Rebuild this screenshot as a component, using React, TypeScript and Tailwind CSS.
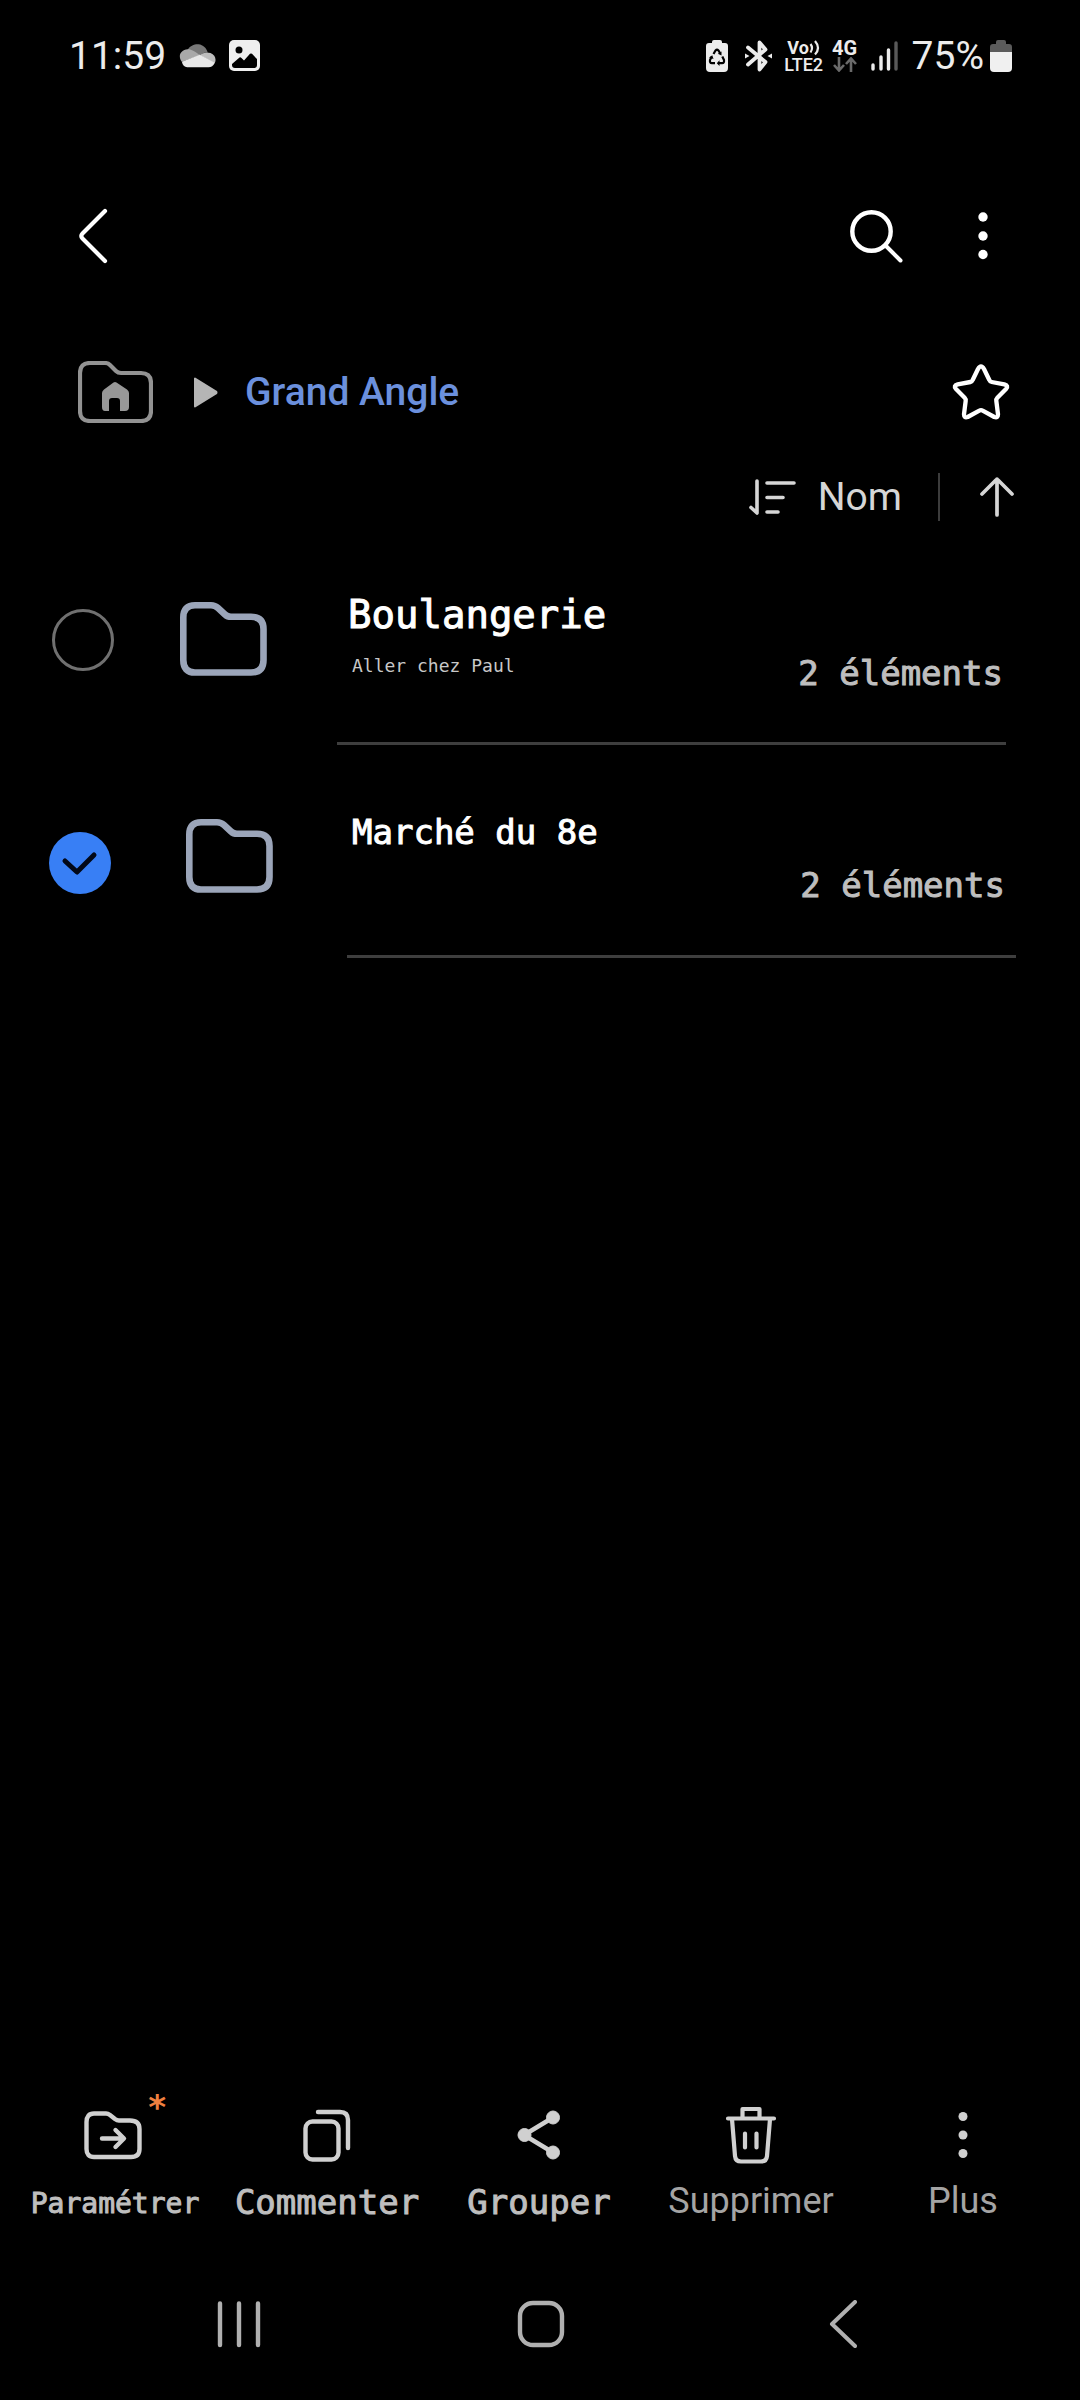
import React, { useState } from "react";

const roboto = "font-['Roboto','Noto_Sans',sans-serif]";
const mono = "font-['DejaVu_Sans_Mono','Liberation_Mono',monospace]";

function StatusBar() {
  return (
    <div className="flex h-[111px] items-center justify-between pl-[69px] pr-[68px] text-[#ececec]">
      <div className="flex items-center">
        <time className="text-[39px] leading-[48px]">11:59</time>
        <svg className="ml-[13px]" width="37" height="24" viewBox="0 0 110 72" aria-label="Nuage">
          <path d="M24 20C32 4 48 0 58 1C72 3 82 12 86 26C76 24 68 30 62 34Z" fill="#787878" />
          <path d="M8 53C-4 38 2 18 26 16C36 16 42 20 64 34Z" fill="#a9a9a9" />
          <path d="M62 34C72 24 84 24 94 27C108 32 113 48 106 58Z" fill="#bdbdbd" />
          <path d="M8 53L62 32L107 56C103 66 96 69 88 70H24C16 69 10 63 8 53Z" fill="#e8e8e8" />
        </svg>
        <svg className="ml-[13px]" width="31" height="31" viewBox="0 0 31 31" aria-label="Image">
          <rect width="31" height="31" rx="5" fill="#efefef" />
          <circle cx="10" cy="10" r="3.500" fill="#000" />
          <path d="M3 25V24L10.500 17.500Q11.500 17 12.500 18L15 20.500L21 13.800Q22 13 23 13.800L28 19V25Q28 28 25 28H6Q3 28 3 25Z" fill="#000" />
        </svg>
      </div>
      <div className="flex items-center">
        <svg width="22" height="32" viewBox="0 0 22 32" aria-label="Économie de batterie">
          <path d="M6 3V2Q6 0 8 0H14Q16 0 16 2V3H19Q22 3 22 6V28Q22 32 18 32H4Q0 32 0 28V6Q0 3 3 3Z" fill="#ececec" />
          <g fill="none" stroke="#000" strokeWidth="2.200" strokeLinejoin="round">
            <path d="M7.500 14L9.500 10.500Q11 9 12.500 10.500L14 13" />
            <path d="M16.300 16.500L18 20Q18.500 23 16 23.200H12.500" />
            <path d="M9 23.200H6Q3.500 23 4 20L5.500 17" />
          </g>
          <path d="M15.500 11.500V15.500L11.800 13.800ZM13.500 20.300V26L10.800 23.200ZM3 17.500L6.300 15.300L7.500 19Z" fill="#000" />
        </svg>
        <svg className="ml-[17px]" width="27" height="32" viewBox="0 0 27 32" aria-label="Bluetooth">
          <path d="M3 7.500L20.500 22L14.500 29.500V2.500L20.500 9.500L3 24.500" fill="none" stroke="#ececec" strokeWidth="3.800" strokeLinecap="round" strokeLinejoin="round" />
          <path d="M0 13.500L4.500 16L0 18.500ZM27 13.500L22.500 16L27 18.500Z" fill="#ececec" />
        </svg>
        <div className="ml-3 flex w-10 flex-col items-center text-[18px] font-bold leading-[17px]">
          <span className="flex items-center">
            Vo
            <svg width="11" height="17" viewBox="0 0 11 17" aria-hidden="true">
              <path d="M1.500 5Q4.500 9 1.500 13.500M6 2Q12 9 6 15.500" fill="none" stroke="#ececec" strokeWidth="2.200" />
            </svg>
          </span>
          <span className="font-medium">LTE2</span>
        </div>
        <div className="ml-[8px] flex w-[26px] flex-col items-center">
          <span className="text-[20px] font-bold leading-[18px]">4G</span>
          <svg width="24" height="15" viewBox="0 0 24 15" aria-hidden="true">
            <path d="M6 0V13M1 8L6 13.500L11 8M18 15V2M13 7L18 1.500L23 7" fill="none" stroke="#6a6a6a" strokeWidth="2.600" />
          </svg>
        </div>
        <svg className="ml-[13px]" width="27" height="30" viewBox="0 0 27 30" aria-label="Signal">
          <path d="M2 24V28M10 16V28M17.500 9V28" stroke="#ececec" strokeWidth="3.400" strokeLinecap="round" />
          <path d="M25 2V28" stroke="#595959" strokeWidth="3.400" strokeLinecap="round" />
        </svg>
        <span className="ml-[14px] text-[39px] leading-[48px]">75%</span>
        <svg className="ml-[6px]" width="22" height="32" viewBox="0 0 22 32" aria-label="Batterie">
          <path d="M6 4V2Q6 0 8 0H14Q16 0 16 2V4H19Q22 4 22 7V13H0V7Q0 4 3 4Z" fill="#5b5b5b" />
          <path d="M0 12H22V28Q22 32 18 32H4Q0 32 0 28Z" fill="#f0f0f0" />
        </svg>
      </div>
    </div>
  );
}

function Header() {
  return (
    <header>
      <div className="mt-[69px] flex h-28 items-center justify-between pl-[78px] pr-[91px]">
        <button aria-label="Retour">
          <svg width="30" height="56" viewBox="0 0 30 56">
            <path d="M27 3L4.500 25.500Q2 28 4.500 30.500L27 53" fill="none" stroke="#fff" strokeWidth="4.200" strokeLinecap="round" />
          </svg>
        </button>
        <div className="flex items-center gap-[74px]">
          <button aria-label="Rechercher">
            <svg width="53" height="53" viewBox="0 0 53 53">
              <circle cx="21.500" cy="21.500" r="19.200" fill="none" stroke="#fff" strokeWidth="4.400" />
              <path d="M36 36L50.500 50.500" stroke="#fff" strokeWidth="4" strokeLinecap="round" />
            </svg>
          </button>
          <button aria-label="Plus d’options">
            <svg width="12" height="50" viewBox="0 0 12 50" fill="#fff">
              <circle cx="6" cy="6" r="4.700" />
              <circle cx="6" cy="25" r="4.700" />
              <circle cx="6" cy="43.500" r="4.700" />
            </svg>
          </button>
        </div>
      </div>
      <nav className="mt-[50px] flex h-[100px] items-center pl-[78px] pr-[68px]" aria-label="Chemin">
        <a href="#accueil" aria-label="Accueil">
          <svg width="75" height="62" viewBox="0 0 75 62">
            <path d="M12 2H27Q30 2 32 4L38 10Q40 12 43 12H63Q73 12 73 22V50Q73 60 63 60H12Q2 60 2 50V12Q2 2 12 2Z" fill="none" stroke="#929292" strokeWidth="4.200" />
            <path d="M24 32Q24 30 26 28.500L35.500 21.500Q37 20.500 38.500 21.500L49 28.500Q51 30 51 32V46Q51 50 47 50H42V40Q42 37 39 37H34Q31 37 31 40V50H27Q24 50 24 46Z" fill="#979797" />
          </svg>
        </a>
        <svg className="ml-[40px]" width="25" height="31" viewBox="0 0 25 31" aria-hidden="true">
          <path d="M2 1.500V29.500L23 16.500Q24 15.500 23 14.500Z" fill="#b5b5b5" stroke="#b5b5b5" strokeWidth="2" strokeLinejoin="round" />
        </svg>
        <a href="#grand-angle" className="ml-[27px] text-[39px] font-medium leading-[48px] text-[#6b90dd]">
          Grand Angle
        </a>
        <button className="ml-auto" aria-label="Favori">
          <svg width="62" height="62" viewBox="0 0 186 186">
            <path d="M84 24Q93 8 102 24L118 57Q120 62 125 63L163 70Q177 74 168 84L142 110Q138 114 139 120L144 160Q144 172 133 168L98 149Q93 146 88 149L53 168Q42 172 42 160L47 120Q48 114 44 110L18 84Q9 74 23 70L61 63Q66 62 68 57Z" fill="none" stroke="#fff" strokeWidth="13" strokeLinejoin="round" />
          </svg>
        </button>
      </nav>
      <div className="mt-[23px] flex h-16 items-center justify-end pr-[66px] text-[#d6d6d6]">
        <button className="flex items-center gap-[22px]">
          <svg width="47" height="36" viewBox="0 0 47 36" fill="none" stroke="currentColor" strokeWidth="3.600" strokeLinecap="round" strokeLinejoin="round">
            <path d="M2 28.500L8 34V2M18 4H45M18 18.500H34M18 33H29" />
          </svg>
          <span className="text-[39px] leading-[48px]">Nom</span>
        </button>
        <span className="ml-[36px] h-12 w-[2px] bg-[#3c3c3c]" />
        <button className="ml-[40px]" aria-label="Ordre croissant">
          <svg width="34" height="40" viewBox="0 0 34 40" fill="none" stroke="currentColor" strokeWidth="3.700" strokeLinecap="round" strokeLinejoin="round">
            <path d="M17 38V2M2 17L15.500 3.500Q17 2 18.500 3.500L32 17" />
          </svg>
        </button>
      </div>
    </header>
  );
}

type Folder = {
  id: string;
  name: string;
  note?: string;
  count: string;
  row: string;
  check: string;
  icon: string;
  body: string;
  title: string;
  countPad: string;
};

const folders: Folder[] = [
  {
    id: "boulangerie",
    name: "Boulangerie",
    note: "Aller chez Paul",
    count: "2 éléments",
    row: "pl-[52px] pr-[74px]",
    check: "mt-[19px]",
    icon: "ml-[66px]",
    body: "ml-[70px] min-h-[155px] pl-[11px] pb-[49px]",
    title: "text-[39px]",
    countPad: "pr-[3px]",
  },
  {
    id: "marche",
    name: "Marché du 8e",
    count: "2 éléments",
    row: "mt-[62px] pl-[49px] pr-16",
    check: "mt-[25px]",
    icon: "ml-[75px]",
    body: "ml-[74px] min-h-[151px] pl-[5px] pb-[50px]",
    title: "text-[34px]",
    countPad: "pr-[11px]",
  },
];

function FolderRow({ folder, checked, onToggle }: { folder: Folder; checked: boolean; onToggle: () => void }) {
  return (
    <li className={`flex items-start ${folder.row}`}>
      <span className={`grid shrink-0 ${folder.check}`}>
        <input
          id={folder.id}
          type="checkbox"
          checked={checked}
          onChange={onToggle}
          className="col-start-1 row-start-1 size-[62px] appearance-none rounded-full border-[3px] border-[#707070] checked:border-0 checked:bg-[#387ff5]"
        />
        {checked && (
          <svg className="pointer-events-none col-start-1 row-start-1" width="62" height="62" viewBox="0 0 62 62" aria-hidden="true">
            <path d="M16 29L28 40L45 23" fill="none" stroke="#020818" strokeWidth="5" strokeLinecap="round" strokeLinejoin="round" />
          </svg>
        )}
      </span>
      <svg className={`mt-3 shrink-0 ${folder.icon}`} width="87" height="74" viewBox="0 0 87 74" aria-hidden="true">
        <path d="M15 3.300H31Q35 3.300 38 6L45 12.500Q47.500 14.800 51 14.800H71Q83.500 14.800 83.500 27V58Q83.500 70.500 71 70.500H15Q3.300 70.500 3.300 58V15.500Q3.300 3.300 15 3.300Z" fill="none" stroke="#9ba5b9" strokeWidth="6.600" />
      </svg>
      <div className={`flex flex-1 justify-between border-b-[3px] border-[#3e3e3e] ${folder.body} ${mono}`}>
        <div>
          <label htmlFor={folder.id} className={`block leading-[50px] text-white [-webkit-text-stroke:1px_#fff] ${folder.title}`}>
            {folder.name}
          </label>
          {folder.note && <p className="mt-[12px] pl-1 text-[18px] leading-7 text-[#c8c8c8]">{folder.note}</p>}
        </div>
        <span className={`self-end text-[34px] leading-10 text-[#bebebe] [-webkit-text-stroke:1px_#bebebe] ${folder.countPad}`}>
          {folder.count}
        </span>
      </div>
    </li>
  );
}

const monoAction =
  "font-['DejaVu_Sans_Mono','Liberation_Mono',monospace] text-[#bebebe] [-webkit-text-stroke:1px_#bebebe]";

const actions = [
  {
    label: "Paramétrer",
    text: `text-[28px] leading-[50px] ${monoAction}`,
    starred: true,
    icon: (
      <svg className="mr-1" width="58" height="49" viewBox="0 0 58 49" fill="none" stroke="#d0d0d0" strokeWidth="4.400" strokeLinecap="round" strokeLinejoin="round">
        <path d="M10 2.500H22Q24 2.500 26 4L31 8Q33 9.500 35 9.500H46Q55.500 9.500 55.500 18V38Q55.500 46 47 46H10Q2.500 46 2.500 38V11Q2.500 2.500 10 2.500Z" />
        <path d="M18 27.500H39M31.500 19L40 27.500L31.500 36" />
      </svg>
    ),
  },
  {
    label: "Commenter",
    text: `text-[34px] leading-[46px] ${monoAction}`,
    icon: (
      <svg width="48" height="53" viewBox="0 0 48 53" fill="none" stroke="#d0d0d0" strokeWidth="4.400" strokeLinecap="round">
        <rect x="2.500" y="12.500" width="33" height="38" rx="7" />
        <path d="M15 3H37Q45 3 45 11V39" />
      </svg>
    ),
  },
  {
    label: "Grouper",
    text: `text-[34px] leading-[46px] ${monoAction}`,
    icon: (
      <svg width="44" height="50" viewBox="0 0 44 50" fill="#d0d0d0" stroke="#d0d0d0">
        <path d="M36 7.500L7 25L36 42.500" fill="none" strokeWidth="4.500" />
        <circle cx="36" cy="7.500" r="6.500" />
        <circle cx="7.500" cy="25" r="6.500" />
        <circle cx="36" cy="42.500" r="6.500" />
      </svg>
    ),
  },
  {
    label: "Supprimer",
    text: "text-[36px] leading-[44px] text-[#a4a4a4]",
    icon: (
      <svg width="52" height="58" viewBox="0 0 52 58" fill="none" stroke="#d0d0d0" strokeWidth="4.200" strokeLinecap="round" strokeLinejoin="round">
        <path d="M3 12.500H49M17.500 12V3H34.500V12M7 13L10 50Q10.500 55.500 16 55.500H36Q41.500 55.500 42 50L45 13M20 27.500V41.500M31.500 27.500V41.500" />
      </svg>
    ),
  },
  {
    label: "Plus",
    text: "text-[36px] leading-[44px] text-[#a4a4a4]",
    icon: (
      <svg width="12" height="50" viewBox="0 0 12 50" fill="#d0d0d0">
        <circle cx="6" cy="6.500" r="4.500" />
        <circle cx="6" cy="25" r="4.500" />
        <circle cx="6" cy="43.500" r="4.500" />
      </svg>
    ),
  },
];

function ActionBar() {
  return (
    <div className="mt-auto grid grid-cols-5 pl-[9px] pr-[11px]">
      {actions.map((action) => (
        <button key={action.label} className="relative flex flex-col items-center">
          <span className="flex h-[60px] items-center">{action.icon}</span>
          {action.starred && (
            <span className={`absolute -top-4 left-[138px] text-[34px] font-bold leading-9 text-[#f08040] ${mono}`}>*</span>
          )}
          <span className={`mt-[14px] ${action.text}`}>{action.label}</span>
        </button>
      ))}
    </div>
  );
}

function SystemNav() {
  return (
    <nav className="mt-[71px] grid grid-cols-3 justify-items-center pb-[52px] pl-[88px] pr-[86px]" aria-label="Système">
      <button aria-label="Applications récentes">
        <svg width="44" height="48" viewBox="0 0 44 48" stroke="#b0b0b0" strokeWidth="4.400" strokeLinecap="round">
          <path d="M3 3.500V45M22 3.500V45M41 3.500V45" />
        </svg>
      </button>
      <button aria-label="Accueil du téléphone">
        <svg width="48" height="48" viewBox="0 0 48 48" fill="none" stroke="#b0b0b0" strokeWidth="4.400">
          <rect x="3" y="3" width="42" height="42" rx="13" />
        </svg>
      </button>
      <button aria-label="Précédent">
        <svg width="28" height="48" viewBox="0 0 28 48" fill="none" stroke="#b0b0b0" strokeWidth="4" strokeLinecap="round" strokeLinejoin="round">
          <path d="M26 2L3 24L26 46" />
        </svg>
      </button>
    </nav>
  );
}

export default function App() {
  const [selected, setSelected] = useState<string[]>(["marche"]);
  const toggle = (id: string) =>
    setSelected((ids) => (ids.includes(id) ? ids.filter((i) => i !== id) : [...ids, id]));

  return (
    <div className={`flex min-h-screen w-full flex-col bg-black ${roboto}`}>
      <StatusBar />
      <Header />
      <main className="mt-[61px]">
        <ul>
          {folders.map((folder) => (
            <FolderRow
              key={folder.id}
              folder={folder}
              checked={selected.includes(folder.id)}
              onToggle={() => toggle(folder.id)}
            />
          ))}
        </ul>
      </main>
      <ActionBar />
      <SystemNav />
    </div>
  );
}
